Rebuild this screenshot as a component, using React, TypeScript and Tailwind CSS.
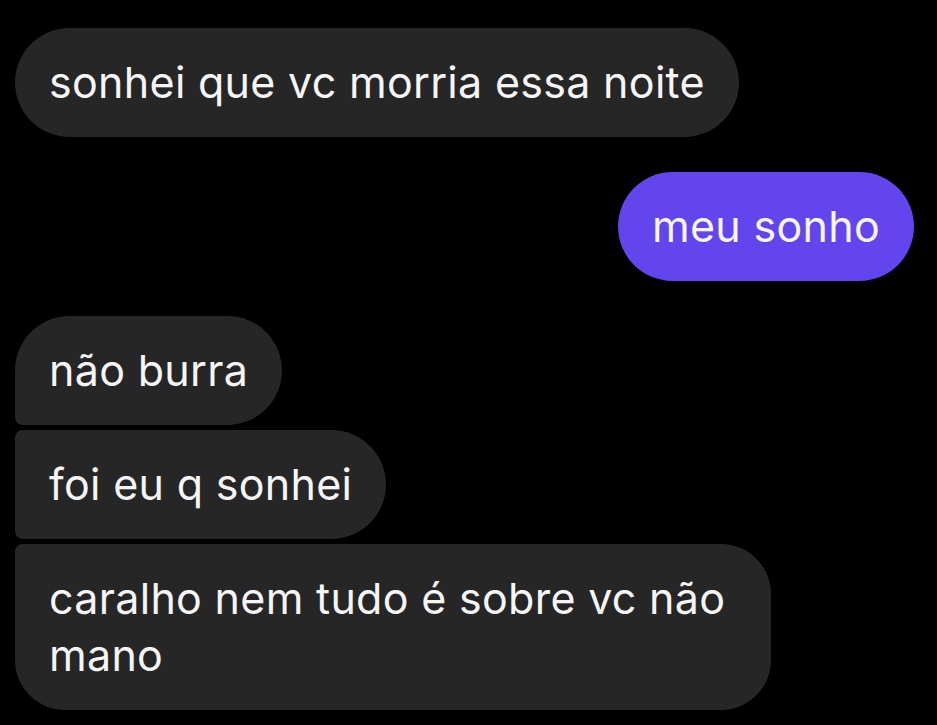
import React from 'react';

type Msg = { id: number; text: string; mine?: boolean; shape: string };

const messages: Msg[][] = [
  [{ id: 1, text: 'sonhei que vc morria essa noite', shape: 'rounded-[55px]' }],
  [{ id: 2, text: 'meu sonho', mine: true, shape: 'rounded-[55px]' }],
  [
    { id: 3, text: 'não burra', shape: 'rounded-[55px] rounded-bl-[8px]' },
    { id: 4, text: 'foi eu q sonhei', shape: 'rounded-[55px] rounded-tl-[8px] rounded-bl-[8px]' },
    { id: 5, text: 'caralho nem tudo é sobre vc não mano', shape: 'rounded-[50px] rounded-tl-[8px]' },
  ],
];

export default function App() {
  return (
    <div className="min-h-screen w-full bg-black pt-[28px] pl-[15px] pr-[23px] font-['Inter','Roboto',sans-serif]">
      <div className="flex flex-col gap-[35px]">
        {messages.map((group, i) => (
          <div key={i} className="flex flex-col gap-[5px]">
            {group.map((m) => (
              <div key={m.id} className={`flex ${m.mine ? 'justify-end' : 'justify-start'}`}>
                <div
                  className={`max-w-[756px] px-[34px] py-[26px] text-[43px] leading-[57px] tracking-[0.3px] text-[#f5f5f5] ${m.shape} ${
                    m.mine ? 'bg-[#6345ed]' : 'bg-[#262626]'
                  }`}
                >
                  {m.text}
                </div>
              </div>
            ))}
          </div>
        ))}
      </div>
    </div>
  );
}
